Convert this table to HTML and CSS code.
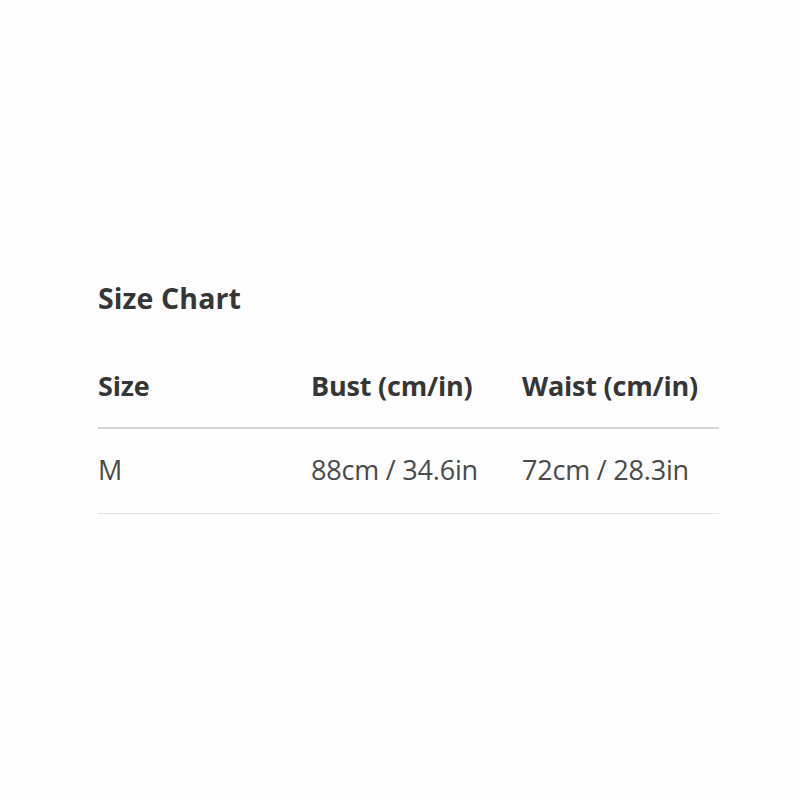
FILE: index.html
```html
<!DOCTYPE html>
<html>
<head>
<meta charset="utf-8">
<link rel="stylesheet" href="styles.css">
</head>
<body>
<div class="chart">
  <h2 class="title">Size Chart</h2>
  <div class="table">
    <div class="row head">
      <div class="cell">Size</div>
      <div class="cell">Bust (cm/in)</div>
      <div class="cell">Waist (cm/in)</div>
    </div>
    <div class="row body">
      <div class="cell">M</div>
      <div class="cell">88cm / 34.6in</div>
      <div class="cell">72cm / 28.3in</div>
    </div>
  </div>
</div>
</body>
</html>
```

FILE: styles.css
```css
html, body {
  margin: 0;
  padding: 0;
  background: #fefefe;
}
body {
  font-family: "Open Sans", sans-serif;
  color: #333;
}
.chart {
  width: 621px;
  padding: 276px 0 0 98px;
}
.title {
  margin: 0;
  font-size: 28.5px;
  font-weight: 700;
  line-height: 44px;
  color: #363636;
  letter-spacing: 0.1px;
}
.table {
  margin-top: 24px;
}
.row {
  display: grid;
  grid-template-columns: 213px 211px 1fr;
  align-items: center;
  box-sizing: border-box;
  letter-spacing: -0.2px;
}
.row.head {
  height: 85px;
  font-weight: 700;
  font-size: 27px;
  color: #363636;
  border-bottom: 2px solid #d6d6d6;
}
.row.body {
  height: 85px;
  padding-bottom: 4px;
  font-size: 27px;
  color: #4a4a4a;
  border-bottom: 1px solid #e2e2e2;
}
```
